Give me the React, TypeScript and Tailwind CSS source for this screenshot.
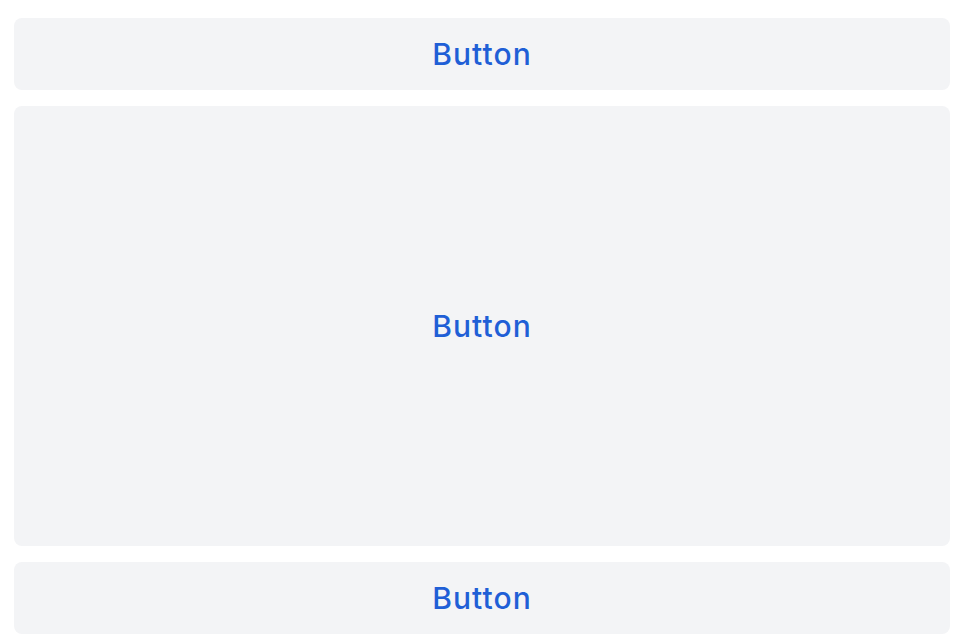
import * as React from "react";

const Btn = ({ className }: { className: string }) => (
  <button
    className={
      "flex items-center justify-center rounded-lg bg-[#f3f4f6] text-[30px] font-medium tracking-[0.035em] text-[#1f5fd6] " +
      className
    }
  >
    Button
  </button>
);

const App = () => {
  return (
    <div
      className="flex h-screen flex-col gap-4 bg-white px-[14px] pt-[18px] pb-[10px]"
      style={{ fontFamily: "Inter, 'Noto Sans', sans-serif" }}
    >
      <Btn className="h-[72px] shrink-0" />
      <Btn className="flex-1" />
      <Btn className="h-[72px] shrink-0" />
    </div>
  );
};

export default App;
